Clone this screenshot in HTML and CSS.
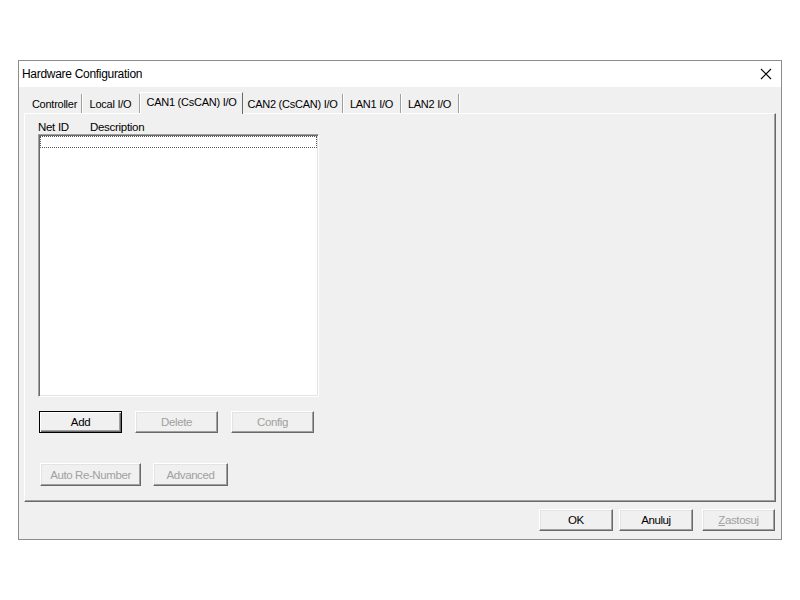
FILE: index.html
```html
<!DOCTYPE html>
<html lang="en">
<head>
    <meta charset="UTF-8">
    <meta name="viewport" content="width=device-width, initial-scale=1.0">
    <title>Hardware Configuration</title>
    <link rel="stylesheet" href="styles.css">
</head>
<body>
    <div class="window">
        <div class="titlebar">
            <span class="title">Hardware Configuration</span>
            <svg class="close" width="12" height="12" viewBox="0 0 12 12">
                <path d="M1 1 L11 11 M11 1 L1 11" stroke="#000" stroke-width="1.1" fill="none"/>
            </svg>
        </div>

        <div class="client">
            <div class="tabs">
                <div class="tab w-controller">Controller</div>
                <div class="tab w-local">Local I/O</div>
                <div class="tab tab-active w-can1">CAN1 (CsCAN) I/O</div>
                <div class="tab w-can2">CAN2 (CsCAN) I/O</div>
                <div class="tab w-lan1">LAN1 I/O</div>
                <div class="tab w-lan2">LAN2 I/O</div>
            </div>

            <div class="panel">
                <div class="list-header">
                    <span class="col-id">Net ID</span>
                    <span class="col-desc">Description</span>
                </div>
                <div class="listbox">
                    <div class="focus-row"></div>
                </div>

                <div class="btn-row row-one">
                    <button class="btn btn-default">Add</button>
                    <button class="btn" disabled>Delete</button>
                    <button class="btn" disabled>Config</button>
                </div>

                <div class="btn-row row-two">
                    <button class="btn btn-wide" disabled>Auto Re-Number</button>
                    <button class="btn btn-small" disabled>Advanced</button>
                </div>
            </div>

            <div class="footer">
                <button class="btn btn-dlg">OK</button>
                <button class="btn btn-dlg">Anuluj</button>
                <button class="btn btn-dlg" disabled><u>Z</u>astosuj</button>
            </div>
        </div>
    </div>
</body>
</html>
```

FILE: styles.css
```css
body {
    margin: 0;
    background: #ffffff;
    font-family: "Liberation Sans", Arial, sans-serif;
    color: #000;
}
.window {
    box-sizing: border-box;
    margin: 60px 0 0 18px;
    width: 764px;
    height: 480px;
    border: 1px solid #8c8c8c;
    display: flex;
    flex-direction: column;
    background: #f0f0f0;
}
.titlebar {
    height: 25px;
    background: #ffffff;
    display: flex;
    align-items: center;
    justify-content: space-between;
    padding: 0 9px 1px 3px;
}
.title {
    font-size: 12px;
    letter-spacing: -0.3px;
}
.close {
    display: block;
}
.client {
    flex: 1;
    display: flex;
    flex-direction: column;
    padding: 5px 5px 0 5px;
}
.tabs {
    display: flex;
    height: 21px;
    padding-left: 4px;
    font-size: 11px;
    letter-spacing: -0.25px;
}
.tab {
    box-sizing: border-box;
    margin-top: 2px;
    height: 19px;
    display: flex;
    align-items: center;
    justify-content: center;
    border-right: 1px solid #a0a0a0;
    box-shadow: 1px 0 0 #ffffff;
}
.tab-active {
    margin-top: 0;
    height: 22px;
    margin-bottom: -1px;
    padding-bottom: 4px;
    background: #f0f0f0;
    border-top: 1px solid #ffffff;
    border-left: 1px solid #ffffff;
    border-right: 1px solid #696969;
    box-shadow: none;
    position: relative;
    z-index: 1;
}
.w-controller { width: 54px; }
.w-local { width: 58px; }
.w-can1 { width: 103px; }
.w-can2 { width: 100px; }
.w-lan1 { width: 58px; }
.w-lan2 { width: 58px; }

.panel {
    box-sizing: border-box;
    height: 389px;
    border: 1px solid;
    border-color: #ffffff #696969 #696969 #ffffff;
    box-shadow: inset -1px -1px 0 #a0a0a0;
    padding: 6px 0 0 13px;
}
.list-header {
    height: 14px;
    display: flex;
    align-items: center;
    font-size: 11.5px;
    letter-spacing: -0.3px;
}
.col-id {
    width: 52px;
}
.listbox {
    box-sizing: border-box;
    width: 281px;
    height: 263px;
    background: #ffffff;
    border: 1px solid;
    border-color: #a0a0a0 #ffffff #ffffff #a0a0a0;
    box-shadow: inset 1px 1px 0 #696969, inset -1px -1px 0 #e3e3e3;
    padding: 1px 1px 0 1px;
}
.focus-row {
    height: 10px;
    border: 1px dotted #555;
}
.btn-row {
    display: flex;
}
.row-one {
    margin-top: 14px;
    padding-left: 1px;
    gap: 13px;
}
.row-two {
    margin-top: 30px;
    padding-left: 2px;
    gap: 12px;
}
.btn {
    box-sizing: border-box;
    width: 83px;
    height: 22px;
    padding: 0;
    font-family: "Liberation Sans", Arial, sans-serif;
    font-size: 11.5px;
    letter-spacing: -0.4px;
    color: #000;
    background: #f0f0f0;
    border: 1px solid;
    border-color: #ffffff #696969 #696969 #ffffff;
    box-shadow: inset -1px -1px 0 #a0a0a0, inset 1px 1px 0 #e3e3e3;
}
.btn:disabled {
    color: #a0a0a0;
}
.btn-default {
    border: 1px solid #000;
    box-shadow: inset 1px 1px 0 #ffffff, inset -1px -1px 0 #696969, inset -2px -2px 0 #a0a0a0;
}
.btn-wide {
    width: 101px;
    height: 23px;
}
.btn-small {
    width: 75px;
    height: 23px;
}
.btn-dlg {
    width: 74px;
}
.footer {
    display: flex;
    justify-content: flex-end;
    padding: 7px 1px 0 0;
    gap: 6px;
}
.footer .btn:last-child {
    margin-left: 3px;
    width: 73px;
}
```
